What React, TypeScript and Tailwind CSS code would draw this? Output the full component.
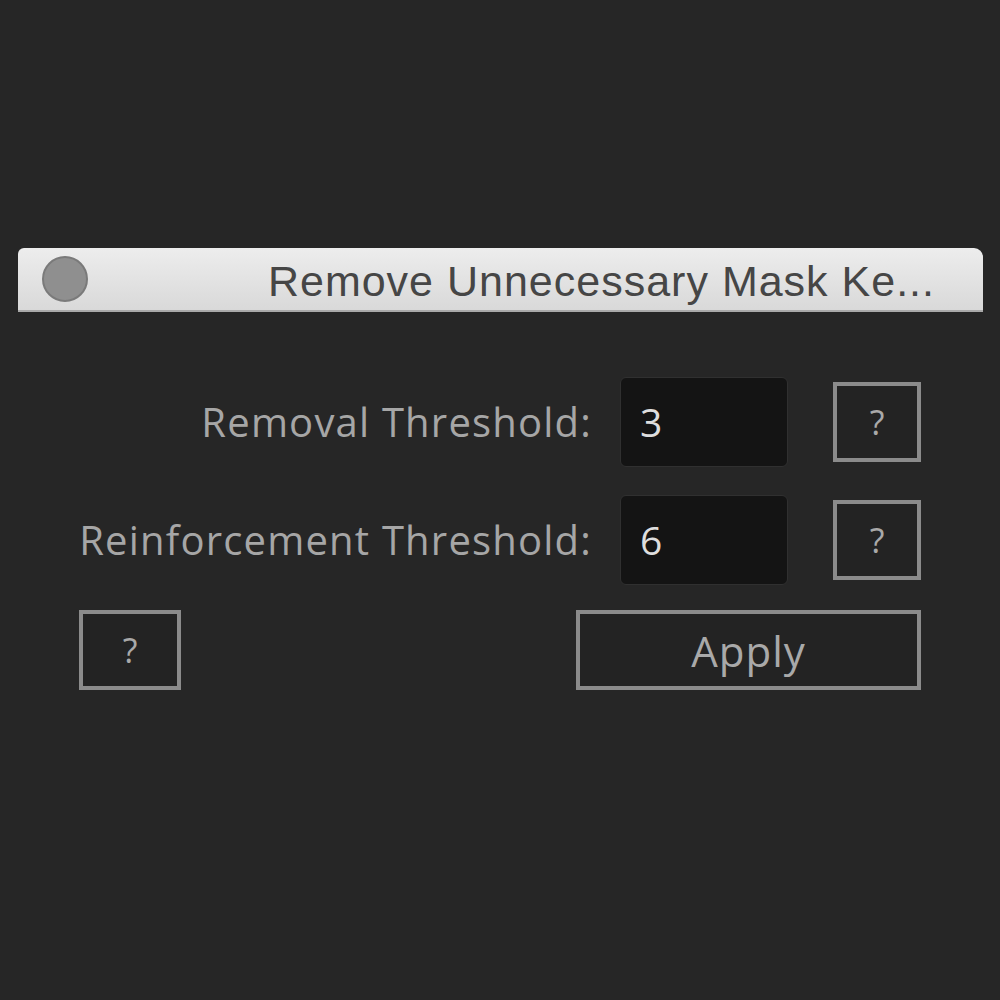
import React from "react";

function HelpButton({ className }: { className: string }) {
  return (
    <button
      className={`flex items-center justify-center border-[4px] border-[#8b8b8b] bg-[#232323] text-[34px] text-[#a9a9a9] ${className}`}
      style={{ fontFamily: "'Open Sans', sans-serif" }}
    >
      ?
    </button>
  );
}

function ThresholdRow({ label, value }: { label: string; value: string }) {
  return (
    <div className="flex items-center">
      <div className="w-[592px] text-right text-[40px] tracking-[1.2px] text-[#a6a6a6]">{label}</div>
      <div className="ml-[28px] flex h-[90px] w-[168px] items-center rounded-md border border-[#303030] bg-[#141414] pl-[19px] text-[39px] text-[#dedede]">
        {value}
      </div>
      <HelpButton className="ml-[45px] h-[80px] w-[88px]" />
    </div>
  );
}

export default function App() {
  return (
    <div
      className="h-[1000px] w-[1000px] overflow-hidden bg-[#262626] pt-[248px]"
      style={{ fontFamily: "'Open Sans', sans-serif" }}
    >
      <div className="ml-[18px] flex h-[64px] w-[965px] items-center rounded-tl-[6px] rounded-tr-[9px] border-b-2 border-[#a9a9a9] bg-gradient-to-b from-[#ededed] to-[#d9d9d9] pl-[24px] pr-[48px]">
        <div className="h-[46px] w-[46px] rounded-full border-2 border-[#7a7a7a] bg-[#8f8f8f]" />
        <div
          className="ml-auto pt-[4px] text-[43px] leading-none tracking-[1px] text-[#464646]"
          style={{ fontFamily: "'Liberation Sans', Arial, sans-serif" }}
        >
          Remove Unnecessary Mask Ke...
        </div>
      </div>

      <div className="flex flex-col gap-[28px] pt-[65px]">
        <ThresholdRow label="Removal Threshold:" value="3" />
        <ThresholdRow label="Reinforcement Threshold:" value="6" />
      </div>

      <div className="mt-[25px] flex">
        <HelpButton className="ml-[79px] h-[80px] w-[102px]" />
        <button className="ml-[395px] flex h-[80px] w-[345px] items-center justify-center border-[4px] border-[#8b8b8b] bg-[#232323] text-[42px] tracking-[1px] text-[#a9a9a9]">
          Apply
        </button>
      </div>
    </div>
  );
}
